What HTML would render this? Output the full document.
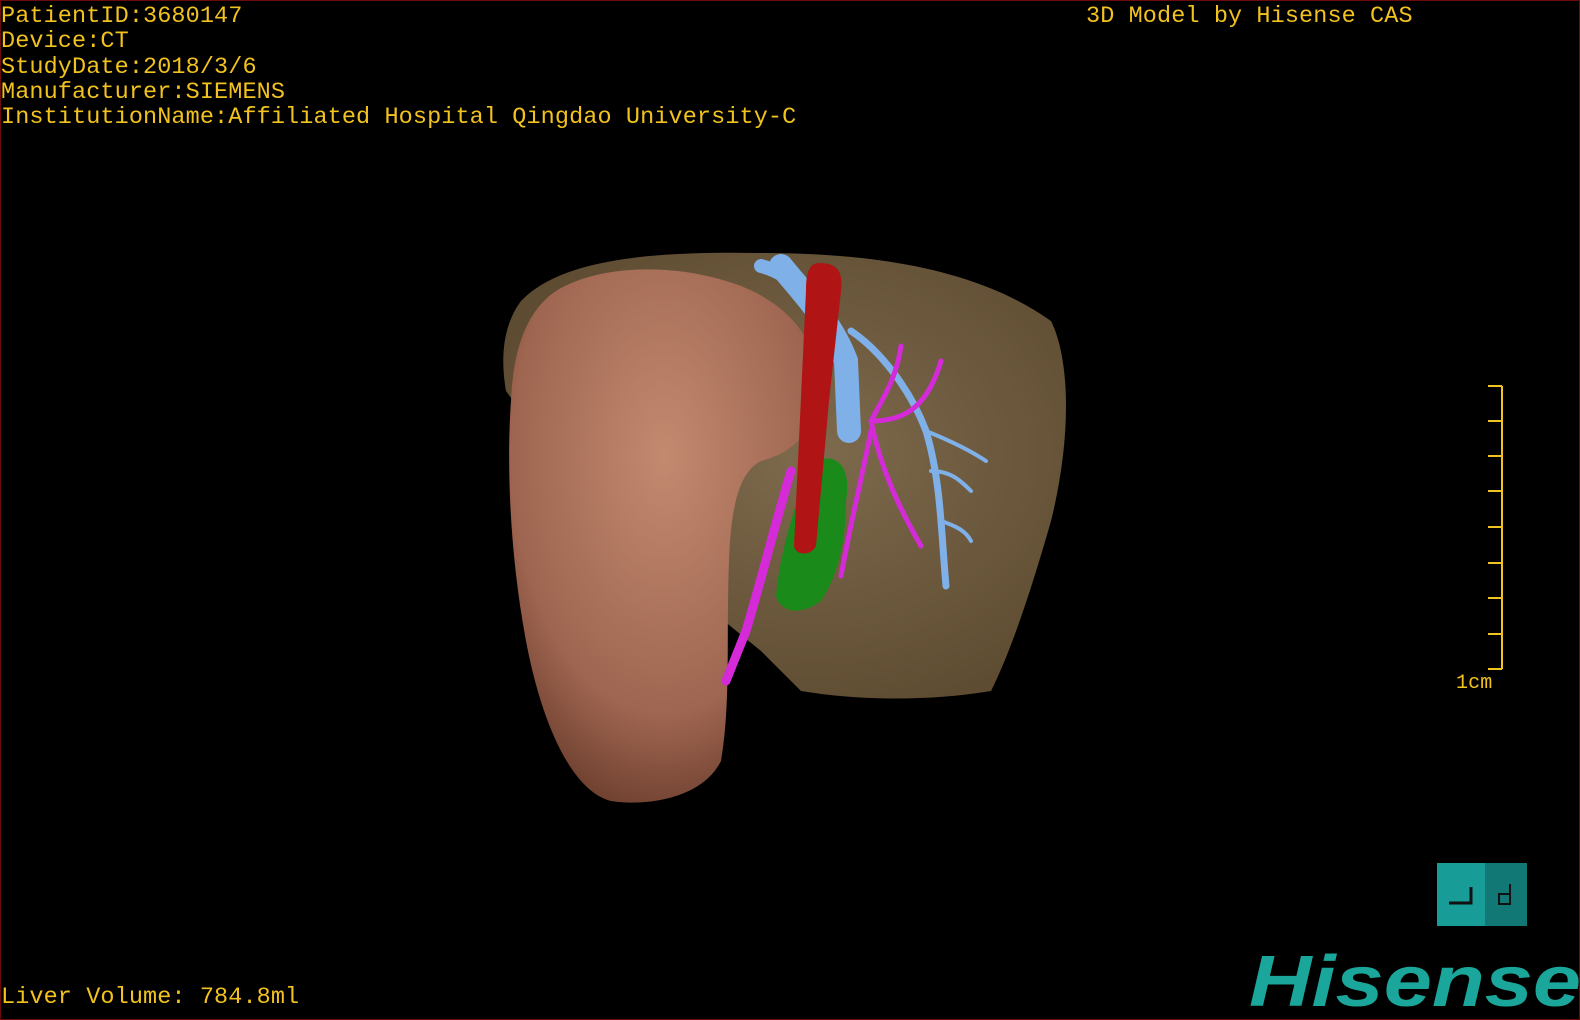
<!DOCTYPE html>
<html><head><meta charset="utf-8"><style>
html,body{margin:0;padding:0;background:#000;}
#v{position:relative;width:1580px;height:1020px;background:#000;overflow:hidden;box-sizing:border-box;border:1px solid #6a0a0a;}
.t{position:absolute;color:#f2c21e;font-family:"Liberation Mono",monospace;font-size:23.5px;line-height:25.3px;white-space:pre;letter-spacing:0.1px;}
</style></head><body><div id="v">
<div class="t" style="left:0px;top:3px">PatientID:3680147
Device:CT
StudyDate:2018/3/6
Manufacturer:SIEMENS
InstitutionName:Affiliated Hospital Qingdao University-C</div>
<div class="t" style="left:1085px;top:3px">3D Model by Hisense CAS</div>
<div class="t" style="left:0px;top:984px">Liver Volume: 784.8ml</div>
<div class="t" style="left:1455px;top:670px;font-size:20px">1cm</div>
<svg width="1580" height="1020" style="position:absolute;left:0;top:0">
<defs>
<radialGradient id="br" cx="0.55" cy="0.45" r="0.6"><stop offset="0" stop-color="#7e6a4c"/><stop offset="1" stop-color="#5e4c32"/></radialGradient>
<radialGradient id="rl" cx="0.5" cy="0.35" r="0.7"><stop offset="0" stop-color="#c48a70"/><stop offset="0.7" stop-color="#9e6550"/><stop offset="1" stop-color="#6a3c2c"/></radialGradient>
</defs>
<g stroke="#f2c21e" stroke-width="2" fill="none">
<path d="M1501 385V668"/><path d="M1487 385H1501M1487 420H1501M1487 455H1501M1487 490H1501M1487 526H1501M1487 562H1501M1487 597H1501M1487 633H1501M1487 668H1501"/>
</g>
<path d="M520 300 C560 258 650 250 760 252 C880 252 980 270 1050 320 C1070 360 1070 440 1050 520 C1030 590 1010 650 990 690 C930 700 860 700 800 690 L760 650 L600 520 L505 390 C498 350 505 320 520 300Z" fill="url(#br)"/>
<path d="M555 290 C600 262 680 262 740 285 C790 305 815 340 818 380 C820 420 800 450 760 460 C740 470 730 500 728 560 C725 640 730 700 720 760 C700 800 640 805 610 800 C570 790 540 720 525 640 C510 560 505 470 510 400 C512 350 525 310 555 290Z" fill="url(#rl)"/>
<g stroke="#7fb0e8" fill="none" stroke-linecap="round">
<path d="M780 265 C800 290 830 320 845 360 L848 430" stroke-width="24"/>
<path d="M850 330 C880 350 910 390 925 430 C940 480 940 530 945 585" stroke-width="7"/>
<path d="M925 430 C950 440 970 450 985 460 M930 470 C950 470 960 480 970 490 M940 520 C955 525 965 530 970 540" stroke-width="4"/>
<path d="M760 265 C780 270 790 280 800 290" stroke-width="14"/>
</g>
<path d="M812 460 C840 450 850 470 845 500 C845 530 840 570 820 600 C800 615 780 612 775 595 C778 560 790 510 812 460Z" fill="#1a8a1a"/>
<g stroke="#d42ad8" fill="none" stroke-linecap="round">
<path d="M790 470 C775 520 760 580 745 630 L725 680" stroke-width="9"/>
<path d="M870 420 C880 400 895 380 900 345 M870 420 C900 420 925 410 940 360 M870 420 C880 470 900 510 920 545 M870 430 C860 480 850 520 840 575" stroke-width="5"/>
</g>
<path d="M818 262 C838 262 842 272 840 290 L828 400 L815 545 C810 555 795 555 793 545 L805 290 C805 272 808 262 818 262Z" fill="#b01414"/>
<rect x="1436" y="862" width="90" height="63" fill="#179c98"/>
<rect x="1484" y="862" width="42" height="63" fill="#127876"/>
<path d="M1448 902H1470V886" stroke="#111" stroke-width="3" fill="none"/>
<path d="M1509 883V903H1498V893H1509" stroke="#111" stroke-width="2" fill="none"/>
<text x="1248" y="1005" font-family="Liberation Sans,sans-serif" font-weight="bold" font-style="italic" font-size="72" fill="#1aa69a" textLength="332" lengthAdjust="spacingAndGlyphs">Hisense</text>
</svg>
</div></body></html>
